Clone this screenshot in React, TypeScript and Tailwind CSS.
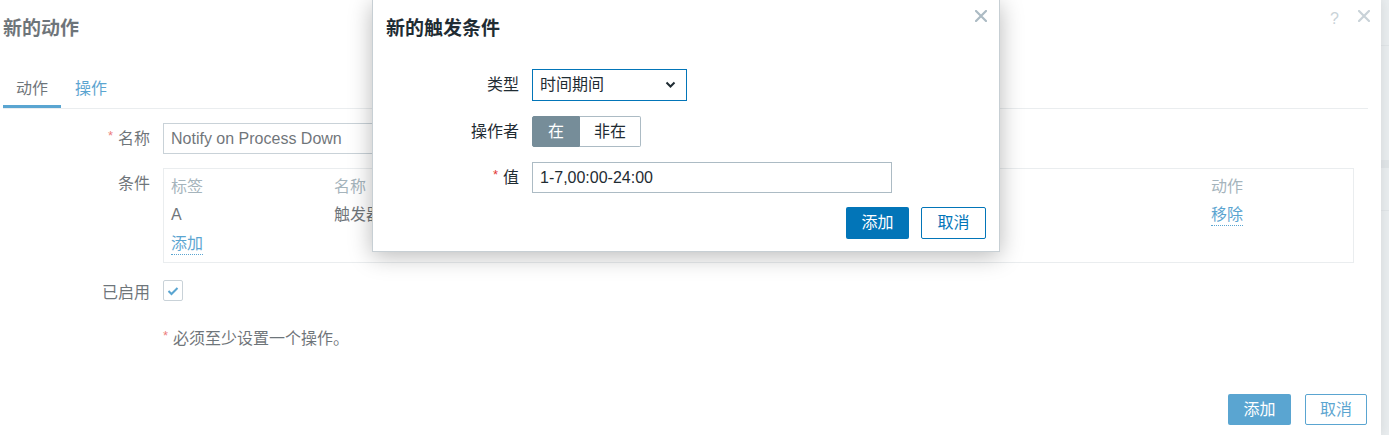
import React from "react";

const font = { fontFamily: '"Liberation Sans", "Noto Sans CJK SC", Arial, sans-serif' };

function XIcon({ size = 12, color = "#acbbc4" }: { size?: number; color?: string }) {
  return (
    <svg width={size} height={size} viewBox="0 0 12 12">
      <path d="M1 1 L11 11 M11 1 L1 11" stroke={color} strokeWidth="2.2" strokeLinecap="square" />
    </svg>
  );
}

function Req() {
  return <span className="text-[#e33734] text-[13px] mr-[5px] relative top-[-3px]">*</span>;
}

export default function App() {
  return (
    <div
      className="relative w-[1389px] h-[435px] overflow-hidden bg-[#dde3e6] text-[16px] text-[#1f2c33]"
      style={font}
    >
      {/* page strip lines on right */}
      <div className="absolute right-0 top-[45px] w-[8px] h-[1px] bg-[#cfd6da]" />
      <div className="absolute right-0 top-[160px] w-[8px] h-[8px] bg-[#cfd6da]" />
      <div className="absolute right-0 top-[210px] w-[8px] h-[1px] bg-[#cfd6da]" />

      {/* back dialog */}
      <div className="relative w-[1381px] h-[435px] bg-white flex flex-col shadow-[0_0_10px_rgba(0,0,0,0.15)]">
        <div className="h-[56px] flex items-center pl-[3px] relative">
          <div className="text-[19px] font-bold leading-none">新的动作</div>
          <div className="absolute right-[42px] top-[7px] text-[#acbbc4] text-[16px]">?</div>
          <div className="absolute right-[11px] top-[10px]">
            <XIcon size={12} />
          </div>
        </div>

        <div className="ml-[3px] mr-[13px] pt-[14px] flex border-b border-[#dfe4e7]">
          <div className="h-[38px] px-[13px] flex items-center border-b-[3px] border-[#0275b8] pt-[3px]">动作</div>
          <div className="h-[38px] px-[13px] flex items-center text-[#0275b8] pl-[14px]">操作</div>
        </div>

        {/* form */}
        <div className="flex flex-col">
          <div className="flex mt-[14px]">
            <div className="w-[150px] h-[31px] flex items-center justify-end">
              <Req />名称
            </div>
            <div className="ml-[13px] w-[420px] h-[31px] border border-[#acbbc4] flex items-center px-[7px]">
              Notify on Process Down
            </div>
          </div>

          <div className="flex mt-[14px]">
            <div className="w-[150px] h-[31px] flex items-center justify-end">条件</div>
            <div className="ml-[13px] w-[1191px] h-[95px] border border-[#dfe4e7] pt-[4px] px-[7px] flex flex-col">
              <div className="h-[27px] flex items-center text-[#768d99]">
                <div className="w-[163px]">标签</div>
                <div className="flex-1">名称</div>
                <div className="w-[135px]">动作</div>
              </div>
              <div className="h-[29px] flex items-center">
                <div className="w-[163px]">A</div>
                <div className="flex-1">触发器示警度 大于或等于 一般严重</div>
                <div className="w-[135px]">
                  <span className="text-[#0275b8] border-b border-dotted border-[#0275b8] leading-[20px] inline-block">移除</span>
                </div>
              </div>
              <div className="h-[30px] flex items-center">
                <span className="text-[#0275b8] border-b border-dotted border-[#0275b8] leading-[20px] inline-block">添加</span>
              </div>
            </div>
          </div>

          <div className="flex mt-[17px]">
            <div className="w-[150px] h-[25px] flex items-center justify-end">已启用</div>
            <div className="ml-[13px] w-[20px] h-[21px] border border-[#acbbc4] rounded-[2px] flex items-center justify-center">
              <svg width="12" height="10" viewBox="0 0 12 10">
                <path d="M1.5 5 L4.5 8 L10.5 2" fill="none" stroke="#0275b8" strokeWidth="2" />
              </svg>
            </div>
          </div>

          <div className="flex mt-[22px]">
            <div className="w-[150px]" />
            <div className="ml-[13px] h-[24px] flex items-center">
              <Req />必须至少设置一个操作。
            </div>
          </div>
        </div>

        <div className="mt-auto pb-[10px] pr-[14px] flex justify-end gap-[14px]">
          <div className="w-[63px] h-[31px] rounded-[2px] bg-[#0275b8] text-white flex items-center justify-center">添加</div>
          <div className="w-[62px] h-[31px] rounded-[2px] border border-[#0275b8] text-[#0275b8] flex items-center justify-center">取消</div>
        </div>
      </div>

      {/* overlay */}
      <div className="absolute inset-0 bg-white/35" />

      {/* front dialog */}
      <div className="absolute left-[372px] top-0 w-[628px] h-[252px] bg-white border border-t-0 border-[#c7cfd4] shadow-[0_4px_22px_rgba(0,0,0,0.28)] flex flex-col">
        <div className="h-[56px] flex items-center pl-[13px] relative">
          <div className="text-[19px] font-bold leading-none text-[#1f2c33]">新的触发条件</div>
          <div className="absolute right-[12px] top-[10px]">
            <XIcon size={12} />
          </div>
        </div>

        <div className="flex mt-[13px]">
          <div className="w-[146px] h-[32px] flex items-center justify-end">类型</div>
          <div className="ml-[13px] w-[155px] h-[32px] border border-[#0275b8] flex items-center justify-between pl-[7px] pr-[10px]">
            <span>时间期间</span>
            <svg width="11" height="8" viewBox="0 0 11 8">
              <path d="M1.5 1.5 L5.5 5.5 L9.5 1.5" fill="none" stroke="#1f2c33" strokeWidth="2" />
            </svg>
          </div>
        </div>

        <div className="flex mt-[15px]">
          <div className="w-[146px] h-[31px] flex items-center justify-end">操作者</div>
          <div className="ml-[13px] flex h-[31px]">
            <div className="w-[48px] h-full bg-[#768d99] border border-[#768d99] text-white flex items-center justify-center rounded-l-[2px]">在</div>
            <div className="w-[61px] h-full border border-l-0 border-[#acbbc4] flex items-center justify-center rounded-r-[2px]">非在</div>
          </div>
        </div>

        <div className="flex mt-[15px]">
          <div className="w-[146px] h-[31px] flex items-center justify-end">
            <Req />值
          </div>
          <div className="ml-[13px] w-[360px] h-[31px] border border-[#acbbc4] flex items-center px-[7px]">
            1-7,00:00-24:00
          </div>
        </div>

        <div className="mt-[14px] pr-[13px] flex justify-end gap-[12px]">
          <div className="w-[63px] h-[32px] rounded-[2px] bg-[#0275b8] text-white flex items-center justify-center">添加</div>
          <div className="w-[65px] h-[32px] rounded-[2px] border border-[#0275b8] text-[#0275b8] flex items-center justify-center">取消</div>
        </div>
      </div>
    </div>
  );
}
